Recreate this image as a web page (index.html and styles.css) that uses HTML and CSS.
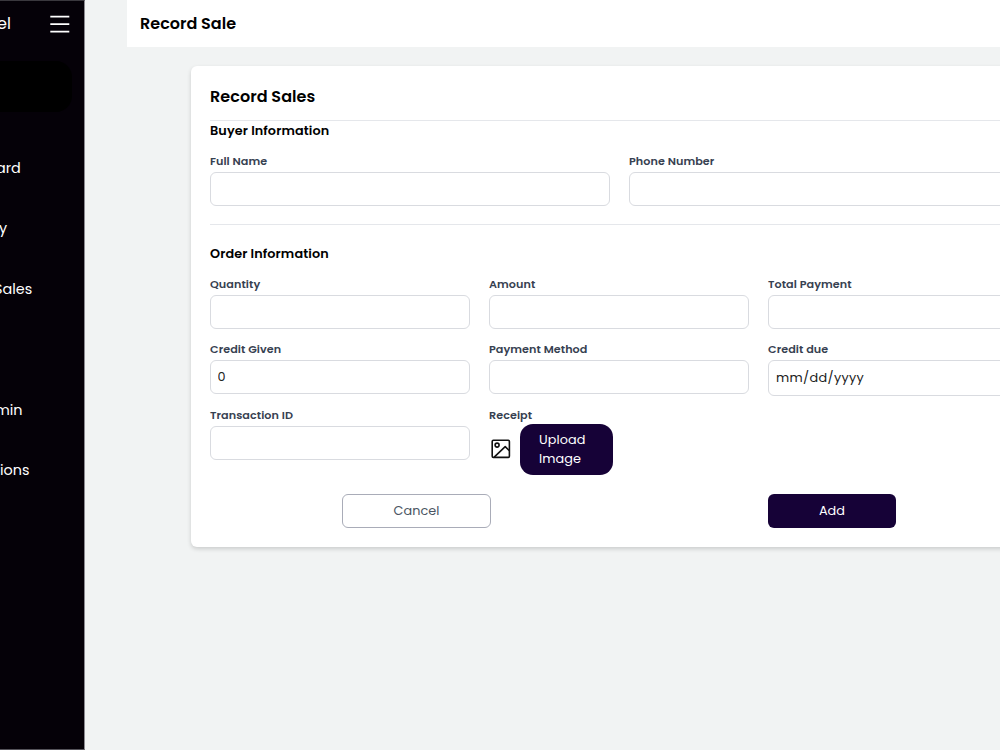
FILE: index.html
```html
<!DOCTYPE html>
<html lang="en">
<head>
    <meta charset="UTF-8">
    <meta name="viewport" content="width=device-width, initial-scale=1.0">
    <title>Record Sale</title>
    <link rel="stylesheet" href="styles.css">
</head>
<body>
    <div class="layout">
        <aside class="sidebar">
            <div class="brand">
                <span class="brand-name">el</span>
                <svg class="menu-icon" width="20" height="18" viewBox="0 0 20 18" stroke="#fff" stroke-width="1.7">
                    <path d="M0.3 1.6h19M0.3 9.1h19M0.3 16.6h19"/>
                </svg>
            </div>
            <div class="profile"></div>
            <nav class="menu">
                <a class="menu-item ard">ard</a>
                <a class="menu-item y">y</a>
                <a class="menu-item sales">Sales</a>
                <a class="menu-item"></a>
                <a class="menu-item min">min</a>
                <a class="menu-item ions">ions</a>
            </nav>
        </aside>
        <main class="content">
            <header class="topbar">Record Sale</header>
            <form class="card">
                <h1 class="card-title">Record Sales</h1>
                <h2 class="section-title">Buyer Information</h2>
                <div class="fields two">
                    <div class="field">
                        <label class="label">Full Name</label>
                        <input class="input" type="text">
                    </div>
                    <div class="field">
                        <label class="label">Phone Number</label>
                        <input class="input" type="text">
                    </div>
                </div>
                <h2 class="section-title order">Order Information</h2>
                <div class="fields three">
                    <div class="field">
                        <label class="label">Quantity</label>
                        <input class="input" type="text">
                    </div>
                    <div class="field">
                        <label class="label">Amount</label>
                        <input class="input" type="text">
                    </div>
                    <div class="field">
                        <label class="label">Total Payment</label>
                        <input class="input" type="text">
                    </div>
                    <div class="field">
                        <label class="label">Credit Given</label>
                        <input class="input" type="text" value="0">
                    </div>
                    <div class="field">
                        <label class="label">Payment Method</label>
                        <input class="input" type="text">
                    </div>
                    <div class="field">
                        <label class="label">Credit due</label>
                        <input class="input date" type="text" value="mm/dd/yyyy">
                    </div>
                    <div class="field">
                        <label class="label">Transaction ID</label>
                        <input class="input" type="text">
                    </div>
                    <div class="field">
                        <label class="label">Receipt</label>
                        <div class="upload">
                            <svg width="20" height="20" viewBox="0 0 20 20" fill="none" stroke="#111" stroke-width="1.6" stroke-linejoin="round">
                                <rect x="1.2" y="1.2" width="17.2" height="17.2" rx="1.2"/>
                                <circle cx="6.1" cy="6.1" r="2"/>
                                <path d="M3.2 18.2L14.2 7.6l4.2 4.2"/>
                            </svg>
                            <button class="upload-btn" type="button">Upload<br>Image</button>
                        </div>
                    </div>
                </div>
                <div class="actions">
                    <button class="btn cancel" type="button">Cancel</button>
                    <button class="btn add" type="button">Add</button>
                </div>
            </form>
        </main>
    </div>
</body>
</html>
```
FILE: styles.css
```css
* {
    box-sizing: border-box;
}
body {
    margin: 0;
    overflow: hidden;
    background: #f1f3f3;
    color: #000;
    font-family: Poppins, Inter, sans-serif;
}
.layout {
    display: flex;
    height: 750px;
}

/* sidebar */
.sidebar {
    flex: none;
    width: 85px;
    background: #050108;
    border: 1px solid #8c8a90;
    border-top-color: #3a383e;
    border-bottom-color: #55535a;
    border-left: 0;
    color: #fff;
    overflow: hidden;
}
.brand {
    display: flex;
    justify-content: space-between;
    align-items: center;
    height: 45px;
    padding-right: 14px;
    font-size: 16px;
}
.brand-name {
    margin-left: -3px;
}
.profile {
    width: 72px;
    height: 51px;
    margin-top: 15px;
    background: #000;
    border-radius: 0 16px 16px 0;
}
.menu {
    margin-top: 26px;
}
.menu-item {
    display: block;
    height: 60.4px;
    font-size: 14.4px;
    line-height: 60px;
}
.ard {
    margin-left: -4px;
}
.y {
    margin-left: -1px;
}
.sales {
    margin-left: -6px;
}
.min {
    margin-left: -5px;
}

/* page */
.content {
    flex: 1;
    min-width: 0;
    padding-left: 42px;
}
.topbar {
    height: 47px;
    padding-left: 13px;
    background: #fff;
    font-size: 16px;
    font-weight: 600;
    line-height: 47px;
}
.card {
    width: 857px;
    height: 481px;
    margin: 19px 0 0 64px;
    padding: 0 19px;
    background: #fff;
    border-radius: 6px;
    box-shadow: 0 2px 4px rgba(0, 0, 0, 0.16);
}
.card-title {
    height: 55px;
    margin: 0;
    border-bottom: 1px solid #e5e7eb;
    font-size: 16px;
    font-weight: 600;
    letter-spacing: 0.04px;
    line-height: 61px;
}
.section-title {
    height: 33px;
    margin: 0;
    font-size: 12.8px;
    font-weight: 600;
    letter-spacing: 0.1px;
    line-height: 19px;
}
.section-title.order {
    height: 53px;
    margin-top: 18px;
    padding-top: 19px;
    border-top: 1px solid #e5e7eb;
}
.fields {
    display: grid;
    column-gap: 19px;
}
.two {
    grid-template-columns: 400px 400px;
}
.three {
    grid-template-columns: 260px 260px 260px;
    grid-template-rows: 65.4px 65.4px 68px;
}
.label {
    display: block;
    height: 18px;
    color: #374151;
    font-size: 11.2px;
    font-weight: 600;
    letter-spacing: 0.06px;
    line-height: 14px;
}
.input {
    display: block;
    width: 100%;
    height: 34px;
    padding: 0 6.5px;
    border: 1px solid #d9dbe0;
    border-radius: 6px;
    background: #fff;
    color: #222;
    font-family: inherit;
    font-size: 12.8px;
}
.date {
    height: 36px;
    padding: 0 7px;
    letter-spacing: 0.35px;
}
.upload {
    display: flex;
    align-items: center;
    gap: 9px;
    height: 51px;
    margin-top: -2px;
    padding-left: 2px;
}
.upload-btn {
    width: 93px;
    height: 51px;
    padding: 0 0 0 19px;
    border: 0;
    border-radius: 13px;
    background: #160237;
    color: #fff;
    font-family: inherit;
    font-size: 12.8px;
    letter-spacing: 0.1px;
    line-height: 19px;
    text-align: left;
}
.actions {
    display: flex;
    gap: 277px;
    margin-top: 18px;
    padding-left: 132px;
}
.btn {
    height: 34px;
    border-radius: 6px;
    font-family: inherit;
    font-size: 12.8px;
    letter-spacing: 0.1px;
}
.cancel {
    width: 149px;
    border: 1px solid #a9acb8;
    background: #fff;
    color: #4b5563;
}
.add {
    width: 128px;
    border: 0;
    background: #160237;
    color: #fff;
}
```
